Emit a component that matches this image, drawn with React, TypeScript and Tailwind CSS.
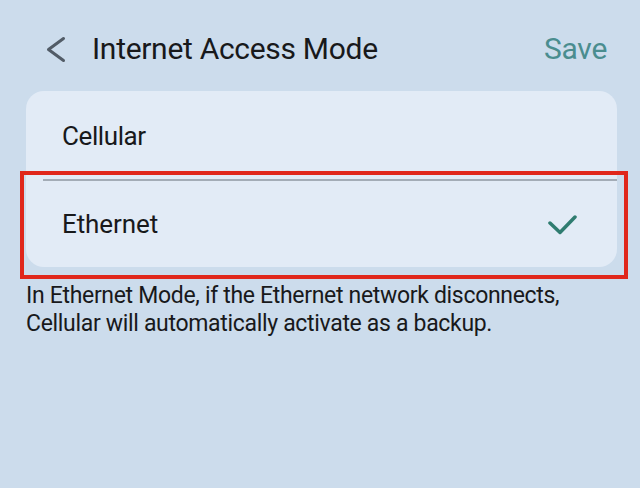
export default function App() {
  return (
    <div className="relative w-[640px] h-[488px] overflow-hidden bg-[#ccdcec] font-['Roboto',sans-serif] text-[#18191b]">
      {/* header */}
      <div className="flex items-center h-[30px] mt-[34px] pr-[33px]">
        <svg className="ml-[44px] w-[24px] h-[30px]" viewBox="0 0 24 30" fill="none">
          <polyline
            points="19.5,4.5 4.5,15.5 19.5,26.5"
            stroke="#525c67"
            strokeWidth="3"
            strokeLinecap="round"
            strokeLinejoin="round"
          />
        </svg>
        <div className="ml-[24px] text-[30px] leading-[30px] tracking-[-0.3px]">Internet Access Mode</div>
        <div className="ml-auto text-[30px] leading-[30px] tracking-[-0.3px] text-[#4a8d8f]">Save</div>
      </div>

      {/* options card */}
      <div className="mx-[26px] mt-[27px] w-[591px] rounded-[18px] bg-[#e2ebf6]">
        <div className="flex items-center h-[88px] pl-[36px] pt-[2px] text-[26px] tracking-[-0.4px]">Cellular</div>
        <div className="ml-[17px] h-[2px] bg-[#a3acb6]" />
        <div className="relative flex items-center h-[86px] pl-[36px] pr-[40px] text-[26px] tracking-[-0.1px]">
          <span>Ethernet</span>
          <svg className="ml-auto w-[30px] h-[22px]" viewBox="0 0 30 22" fill="none">
            <polyline
              points="3,10 13,19.5 28,4"
              stroke="#2f7c70"
              strokeWidth="3.5"
              strokeLinecap="round"
              strokeLinejoin="round"
            />
          </svg>
          <div className="absolute left-[-6px] top-[-10px] right-[-11px] bottom-[-12px] border-4 border-[#e0271b]" />
        </div>
      </div>

      {/* note */}
      <p className="mt-[15px] px-[26px] text-[23px] leading-[28px] tracking-[-0.32px]">
        In Ethernet Mode, if the Ethernet network disconnects,
        <br />
        Cellular will automatically activate as a backup.
      </p>
    </div>
  )
}
